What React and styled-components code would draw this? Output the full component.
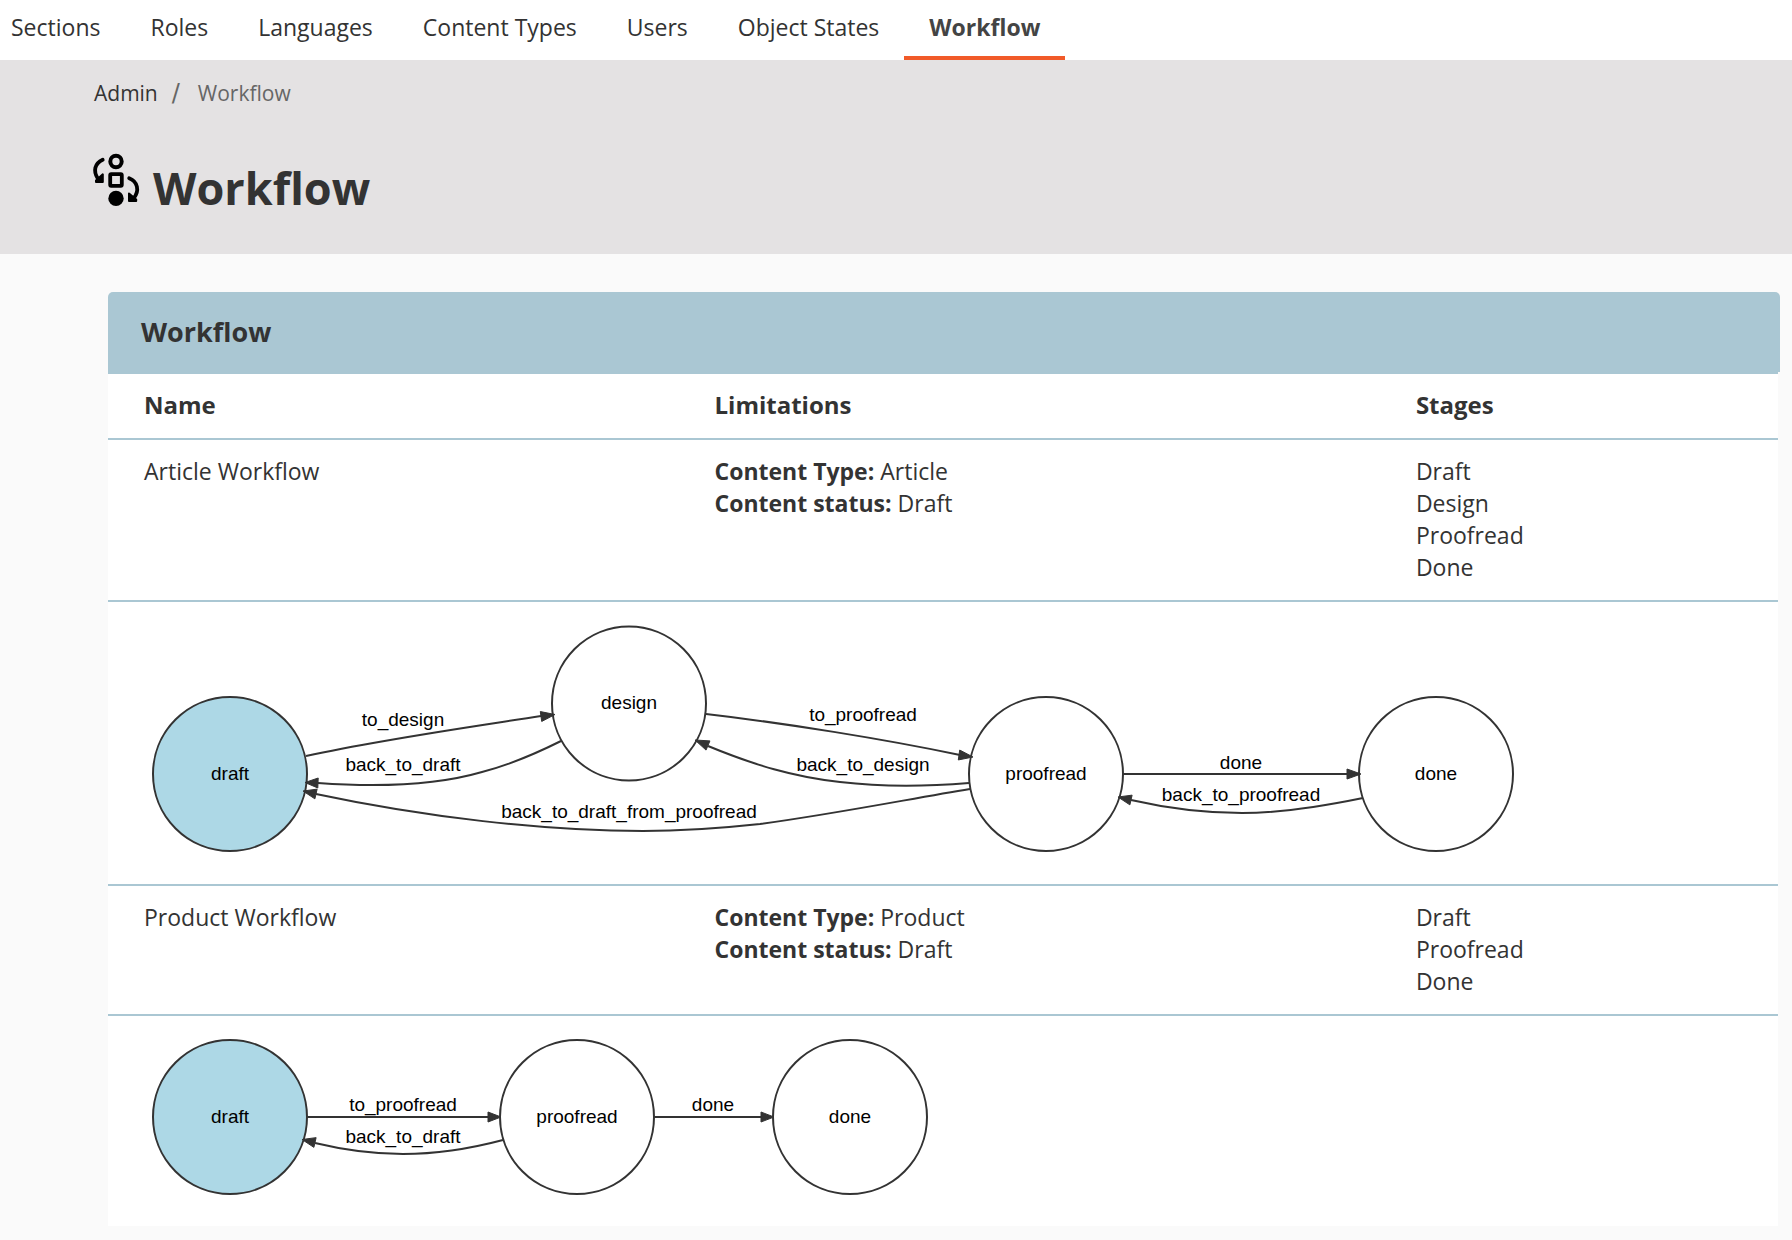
import React from "react";
import styled, { createGlobalStyle } from "styled-components";

const ink = "#333333";
const accent = "#aac7d3";

const GlobalStyle = createGlobalStyle`
  *, *::before, *::after { box-sizing: border-box; }
  body {
    margin: 0;
    background: #fafafa;
    color: ${ink};
    font-family: "Open Sans", "Noto Sans", sans-serif;
    font-size: 23px;
    line-height: 32px;
  }
`;

const TabBar = styled.nav`
  background: #ffffff;
  overflow: hidden;
`;

const TabList = styled.ul`
  display: flex;
  margin: 0 0 0 -14px;
  padding: 0;
  list-style: none;
`;

const Tab = styled.a`
  display: block;
  padding: 11px 25px 13px;
  border-bottom: 4px solid ${(p) => (p.$active ? "#f15a29" : "transparent")};
  color: ${(p) => (p.$active ? "#444444" : ink)};
  font-weight: ${(p) => (p.$active ? 700 : 400)};
  text-decoration: none;
  white-space: nowrap;
`;

const PageHeader = styled.header`
  padding: 17px 12px 30px 94px;
  background: #e4e2e3;
`;

const Breadcrumb = styled.ol`
  display: flex;
  margin: 0 0 43px;
  padding: 0;
  list-style: none;
  font-size: 21px;
`;

const Crumb = styled.li`
  display: flex;
  align-items: baseline;
  color: #666666;

  & + &::before {
    content: "/";
    padding: 0 18px 0 14px;
    font-family: "DejaVu Sans", sans-serif;
    font-size: 24px;
    line-height: 24px;
  }
`;

const CrumbLink = styled.a`
  color: ${ink};
  text-decoration: none;
`;

const TitleRow = styled.div`
  display: flex;
  align-items: flex-start;
  gap: 11px;
`;

const PageTitle = styled.h1`
  margin: 0;
  font-size: 45px;
  font-weight: 700;
  line-height: 72px;
`;

const Main = styled.main`
  padding: 38px 12px 14px 108px;
`;

const PanelHead = styled.div`
  padding: 21px 33px;
  border-radius: 5px 5px 0 0;
  background: ${accent};
`;

const PanelTitle = styled.h2`
  margin: 0;
  font-size: 27px;
  font-weight: 700;
  line-height: 38px;
`;

const TableWrap = styled.div`
  padding-right: 2px;
`;

const Table = styled.table`
  width: 100%;
  table-layout: fixed;
  border-spacing: 0;
  background: #ffffff;
`;

const HeadCell = styled.th`
  width: ${(p) => p.$width};
  padding: 15px 22px 17px;
  border-top: 2px solid ${accent};
  font-size: 24px;
  text-align: left;

  &:first-child { padding-left: 36px; }
`;

const Cell = styled.td`
  padding: 15px 22px 17px;
  border-top: 2px solid ${accent};
  vertical-align: top;

  &:first-child { padding-left: 36px; }
`;

const GraphCell = styled(Cell)`
  padding-top: 16px;
  padding-bottom: 16px;
`;

const Graph = styled.svg`
  display: block;
  max-width: 100%;
`;

const GraphText = styled.text`
  fill: #000000;
  font-family: "Liberation Sans", Arial, sans-serif;
  font-size: 19px;
  text-anchor: middle;
`;

const EdgePath = styled.path`
  fill: none;
  stroke: ${ink};
  stroke-width: 2;
`;

const NodeCircle = styled.circle`
  fill: ${(p) => (p.$initial ? "#add8e6" : "none")};
  stroke: ${ink};
  stroke-width: 2;
`;

const tabs = ["Sections", "Roles", "Languages", "Content Types", "Users", "Object States", "Workflow"];

const workflows = [
  {
    name: "Article Workflow",
    type: "Article",
    status: "Draft",
    stages: ["Draft", "Design", "Proofread", "Done"],
    graph: {
      width: 1400,
      height: 250,
      nodes: [
        { label: "draft", x: 86, y: 156, initial: true },
        { label: "design", x: 485, y: 85.5 },
        { label: "proofread", x: 902, y: 156 },
        { label: "done", x: 1292, y: 156 },
      ],
      edges: [
        { label: "to_design", x: 259, y: 108, d: "M162,138 C240,121 320,110 397,98", base: [397, 98.5], tip: [411, 96.5] },
        { label: "back_to_draft", x: 259, y: 153, d: "M417,123 C399,132 365,147 338,154 C290,168 230,169 174,165", base: [174, 165], tip: [161, 164.5] },
        { label: "back_to_draft_from_proofread", x: 485, y: 200, d: "M826,171 C765,181 690,196 616,206 C570,211 530,213 499,213 C400,213 280,199 172,176", base: [172, 176], tip: [159, 173] },
        { label: "to_proofread", x: 719, y: 103, d: "M562,96 C640,105 740,121 816,137", base: [815, 137], tip: [829, 139] },
        { label: "back_to_design", x: 719, y: 153, d: "M825,165 C775,169 730,168 696,164 C650,159 610,147 564,128", base: [564, 127.5], tip: [551, 122] },
        { label: "done", x: 1097, y: 151, d: "M979,156 L1203,156", base: [1203, 156], tip: [1217, 156] },
        { label: "back_to_proofread", x: 1097, y: 183, d: "M1219,180 C1180,188 1140,195 1098,195 C1062,195 1022,190 987,182", base: [987, 182], tip: [974, 179] },
      ],
    },
  },
  {
    name: "Product Workflow",
    type: "Product",
    status: "Draft",
    stages: ["Draft", "Proofread", "Done"],
    graph: {
      width: 800,
      height: 178,
      nodes: [
        { label: "draft", x: 86, y: 85, initial: true },
        { label: "proofread", x: 433, y: 85 },
        { label: "done", x: 706, y: 85 },
      ],
      edges: [
        { label: "to_proofread", x: 259, y: 79, d: "M163,85 L344,85", base: [344, 85], tip: [357, 85] },
        { label: "back_to_draft", x: 259, y: 111, d: "M359,108 C325,117 290,122 259,122 C230,122 200,118 171,111", base: [171, 110.5], tip: [158, 107.5] },
        { label: "done", x: 569, y: 79, d: "M510,85 L617,85", base: [617, 85], tip: [630, 85] },
      ],
    },
  },
];

function arrowPoints([bx, by], [tx, ty]) {
  const length = Math.hypot(tx - bx, ty - by);
  const nx = (-(ty - by) / length) * 5;
  const ny = ((tx - bx) / length) * 5;
  return `${bx + nx},${by + ny} ${tx},${ty} ${bx - nx},${by - ny}`;
}

function WorkflowGraph({ name, graph }) {
  return (
    <Graph
      width={graph.width}
      height={graph.height}
      viewBox={`0 0 ${graph.width} ${graph.height}`}
      role="img"
      aria-label={name}
    >
      {graph.nodes.map((n) => (
        <g key={n.label}>
          <NodeCircle cx={n.x} cy={n.y} r="77" $initial={n.initial} />
          <GraphText x={n.x} y={Math.floor(n.y) + 6}>{n.label}</GraphText>
        </g>
      ))}
      {graph.edges.map((e) => (
        <g key={e.label}>
          <EdgePath d={e.d} />
          <polygon points={arrowPoints(e.base, e.tip)} fill={ink} stroke={ink} />
          <GraphText x={e.x} y={e.y}>{e.label}</GraphText>
        </g>
      ))}
    </Graph>
  );
}

function WorkflowIcon() {
  return (
    <svg width="48" height="56" viewBox="1 0 48 56" overflow="visible" fill="none" stroke="#000" aria-hidden="true">
      <circle cx="23" cy="9.5" r="5.7" strokeWidth="4" />
      <rect x="17.2" y="22.2" width="11.6" height="11.6" rx="1" strokeWidth="3.8" />
      <circle cx="23" cy="46.4" r="7.7" fill="#000" stroke="none" />
      <g strokeWidth="3.8" strokeLinecap="round">
        <path d="M9.7,7.7 C1.5,11.5 0,19 4.8,26.5" />
        <path d="M36.2,26.2 C44.5,29.5 47,38.5 40.5,46.5" />
      </g>
      <g fill="#000" strokeWidth="2" strokeLinejoin="round">
        <path d="M9.8,22.3 L9.8,30 L3,30 L3,28.5 Z" />
        <path d="M36,41.5 L36,49 L43.2,49 L43.2,47.5 Z" />
      </g>
    </svg>
  );
}

export default function App() {
  return (
    <>
      <GlobalStyle />
      <TabBar>
        <TabList>
          {tabs.map((t) => (
            <li key={t}>
              <Tab href="#" $active={t === "Workflow"} aria-current={t === "Workflow" ? "page" : undefined}>
                {t}
              </Tab>
            </li>
          ))}
        </TabList>
      </TabBar>
      <PageHeader>
        <Breadcrumb>
          <Crumb><CrumbLink href="#">Admin</CrumbLink></Crumb>
          <Crumb>Workflow</Crumb>
        </Breadcrumb>
        <TitleRow>
          <WorkflowIcon />
          <PageTitle>Workflow</PageTitle>
        </TitleRow>
      </PageHeader>
      <Main>
        <PanelHead>
          <PanelTitle>Workflow</PanelTitle>
        </PanelHead>
        <TableWrap>
          <Table>
            <thead>
              <tr>
                <HeadCell scope="col" $width="35%">Name</HeadCell>
                <HeadCell scope="col" $width="42%">Limitations</HeadCell>
                <HeadCell scope="col" $width="23%">Stages</HeadCell>
              </tr>
            </thead>
            <tbody>
              {workflows.map((w) => (
                <React.Fragment key={w.name}>
                  <tr>
                    <Cell>{w.name}</Cell>
                    <Cell>
                      <div><strong>Content Type:</strong> {w.type}</div>
                      <div><strong>Content status:</strong> {w.status}</div>
                    </Cell>
                    <Cell>
                      {w.stages.map((s) => <div key={s}>{s}</div>)}
                    </Cell>
                  </tr>
                  <tr>
                    <GraphCell colSpan={3}>
                      <WorkflowGraph name={w.name} graph={w.graph} />
                    </GraphCell>
                  </tr>
                </React.Fragment>
              ))}
            </tbody>
          </Table>
        </TableWrap>
      </Main>
    </>
  );
}
